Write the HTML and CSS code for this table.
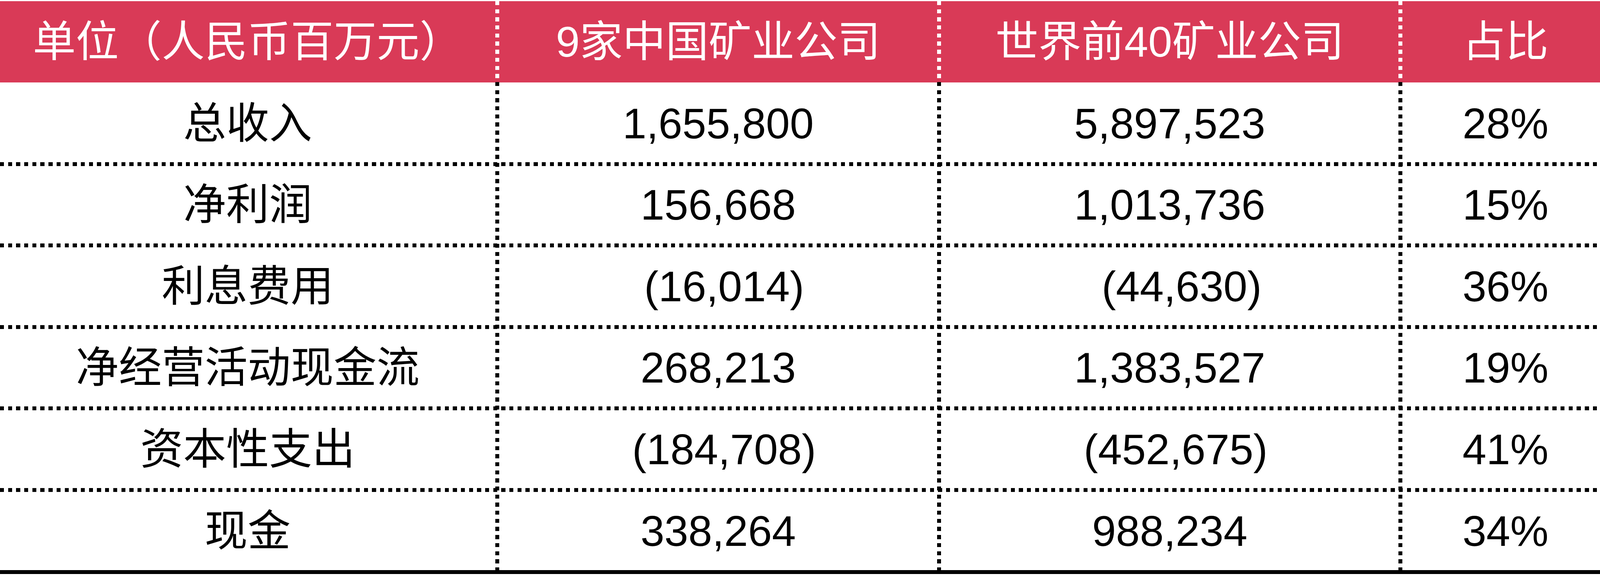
FILE: index.html
```html
<!DOCTYPE html>
<html lang="zh-CN">
<head>
<meta charset="utf-8">
<title>中国矿业公司与世界前40矿业公司对比</title>
<link rel="stylesheet" href="styles.css">
</head>
<body>
<div class="table">
  <div class="band band-head r1"></div>
  <div class="band band-dot r2"></div>
  <div class="band band-dot r3"></div>
  <div class="band band-dot r4"></div>
  <div class="band band-dot r5"></div>
  <div class="band band-dot r6"></div>
  <div class="band band-solid r7"></div>

  <div class="cell head r1 c1">单位（人民币百万元）</div>
  <div class="cell head r1 c2">9家中国矿业公司</div>
  <div class="cell head r1 c3">世界前40矿业公司</div>
  <div class="cell head r1 c4">占比</div>

  <div class="cell body first r2 c1">总收入</div>
  <div class="cell body first r2 c2">1,655,800</div>
  <div class="cell body first r2 c3">5,897,523</div>
  <div class="cell body first r2 c4">28%</div>

  <div class="cell body r3 c1">净利润</div>
  <div class="cell body r3 c2">156,668</div>
  <div class="cell body r3 c3">1,013,736</div>
  <div class="cell body r3 c4">15%</div>

  <div class="cell body r4 c1">利息费用</div>
  <div class="cell body r4 c2"> (16,014)</div>
  <div class="cell body r4 c3">  (44,630)</div>
  <div class="cell body r4 c4">36%</div>

  <div class="cell body r5 c1">净经营活动现金流</div>
  <div class="cell body r5 c2">268,213</div>
  <div class="cell body r5 c3">1,383,527</div>
  <div class="cell body r5 c4">19%</div>

  <div class="cell body r6 c1">资本性支出</div>
  <div class="cell body r6 c2"> (184,708)</div>
  <div class="cell body r6 c3"> (452,675)</div>
  <div class="cell body r6 c4">41%</div>

  <div class="cell body r7 c1">现金</div>
  <div class="cell body r7 c2">338,264</div>
  <div class="cell body r7 c3">988,234</div>
  <div class="cell body r7 c4">34%</div>

  <div class="divider d1"></div>
  <div class="divider d2"></div>
  <div class="divider d3"></div>
</div>
</body>
</html>
```

FILE: styles.css
```css
html, body {
  margin: 0;
  padding: 0;
  background: #ffffff;
}

body {
  padding-top: 3px;
  font-family: "Liberation Sans", "Noto Sans CJK SC", sans-serif;
}

.table {
  display: grid;
  width: 4118px;
  grid-template-columns: 1268px 10px 1121px 10px 1171px 10px 528px;
  grid-template-rows: 208px 214px 208px 209px 208px 209px 210px;
}

.band {
  grid-column: 1 / -1;
}

.band-head {
  background: #d93a57;
}

.band-dot {
  background: repeating-linear-gradient(to right, #000 0 10.35px, transparent 10.35px 20.7px) left bottom / 100% 10px no-repeat;
}

.band-solid {
  background: linear-gradient(#000, #000) left bottom / 100% 10px no-repeat;
}

.r1 { grid-row: 1; }
.r2 { grid-row: 2; }
.r3 { grid-row: 3; }
.r4 { grid-row: 4; }
.r5 { grid-row: 5; }
.r6 { grid-row: 6; }
.r7 { grid-row: 7; }

.c1 { grid-column: 1; }
.c2 { grid-column: 3; }
.c3 { grid-column: 5; }
.c4 { grid-column: 7; }

.cell {
  display: flex;
  align-items: center;
  justify-content: center;
  font-size: 110px;
  line-height: 1;
  white-space: pre;
  font-weight: normal;
}

.head {
  color: #ffffff;
}

.body {
  color: #000000;
  padding-bottom: 10px;
}

.body.first {
  padding-top: 6px;
}

.divider {
  grid-row: 1 / -1;
  background:
    repeating-linear-gradient(to bottom, #fff 0 10.35px, transparent 10.35px 20.7px) left top / 100% 206px no-repeat,
    repeating-linear-gradient(to bottom, #000 0 10.35px, transparent 10.35px 20.7px) left top / 100% 100% no-repeat;
}

.d1 { grid-column: 2; }
.d2 { grid-column: 4; }
.d3 { grid-column: 6; }
```
